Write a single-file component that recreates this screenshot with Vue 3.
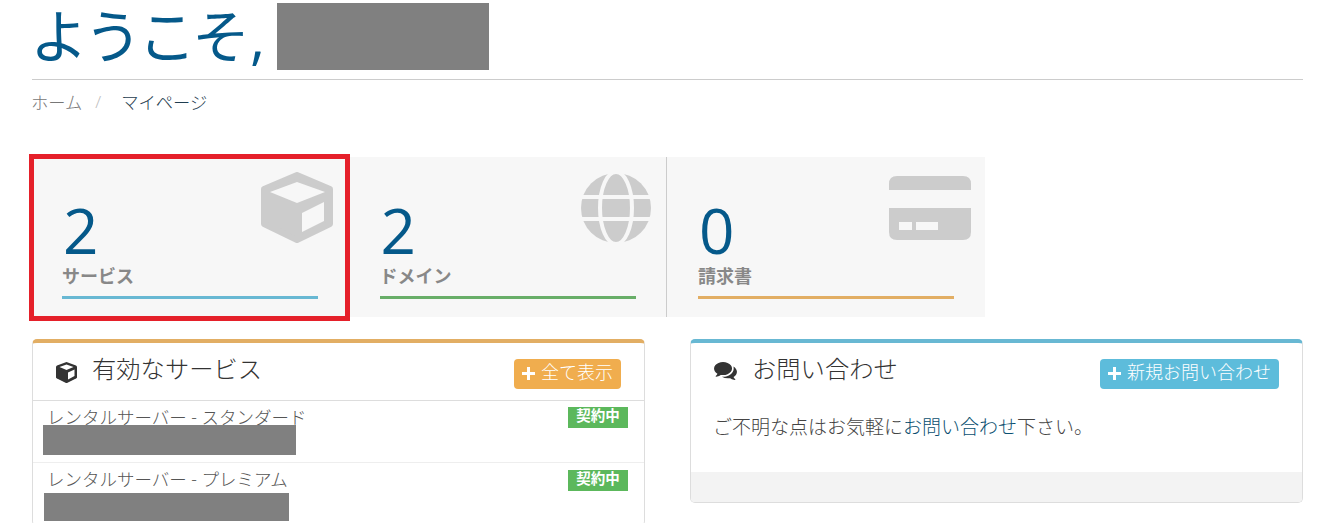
<script setup>
const tiles = [
  { n: 2, label: 'サービス', bar: 'bar-info', icon: 'cube', marked: true },
  { n: 2, label: 'ドメイン', bar: 'bar-success', icon: 'globe' },
  { n: 0, label: '請求書', bar: 'bar-warning', icon: 'card' },
]
const services = [
  { name: 'レンタルサーバー - スタンダード', redact: 'redact-a' },
  { name: 'レンタルサーバー - プレミアム', redact: 'redact-b' },
]
const commentsPath = 'M1408 768q0 139-94 257t-256.5 186.5-353.5 68.5q-86 0-176-16-124 88-278 128-36 9-86 16h-3q-11 0-20.5-8t-11.5-21q-1-3-1-6.5t.5-6.5 2-6l2.5-5 3.5-5.5 4-5 4.5-5 4-4.5q5-6 23-25t26-29.5 22.5-29 25-38.5 20.5-44q-124-72-195-177t-71-224q0-139 94-257t256.5-186.5 353.5-68.5 353.5 68.5 256.5 186.5 94 257zm384 256q0 120-71 224.5t-195 176.5q10 24 20.5 44t25 38.5 22.5 29 26 29.5 23 25q1 1 4 4.5t4.5 5 4 5 3.5 5.5l2.5 5 2 6 .5 6.5-1 6.5q-3 14-13 22t-22 7q-50-7-86-16-154-40-278-128-90 16-176 16-271 0-472-132 58 4 88 4 161 0 309-45t264-129q125-92 192-212t67-254q0-77-23-152 129 71 204 178t75 230z'
</script>

<template>
  <div class="page">
    <header class="title-row">
      <h1>ようこそ<span class="comma">,</span></h1>
      <span class="redact redact-title"></span>
    </header>
    <nav class="crumbs">
      <span class="crumb-home">ホーム</span>
      <span class="crumb-sep">/</span>
      <span class="crumb-current">マイページ</span>
    </nav>

    <section class="tiles">
      <div v-for="t in tiles" :key="t.label" class="tile">
        <div class="tile-n">{{ t.n }}</div>
        <div class="tile-label">{{ t.label }}</div>
        <div class="tile-bar" :class="t.bar"></div>

        <svg v-if="t.icon === 'cube'" class="ic ic-cube" viewBox="0 0 72 71">
          <path d="M36 3 69 17V52L36 68 3 52V17Z" fill="#ccc" stroke="#ccc" stroke-width="6" stroke-linejoin="round" />
          <path d="M36 10 64 20 36 31 9 20Z" fill="#f7f7f7" />
          <path d="M41 41 63 30V49L41 60Z" fill="#f7f7f7" />
        </svg>
        <svg v-else-if="t.icon === 'globe'" class="ic ic-globe" viewBox="0 0 70 70">
          <circle cx="35" cy="35" r="35" fill="#ccc" />
          <ellipse cx="35" cy="35" rx="16" ry="36" fill="none" stroke="#f7f7f7" stroke-width="4" />
          <rect x="0" y="22" width="70" height="4" fill="#f7f7f7" />
          <rect x="0" y="44" width="70" height="4" fill="#f7f7f7" />
        </svg>
        <svg v-else class="ic ic-card" viewBox="0 0 82 64">
          <path d="M0 14V8Q0 0 8 0H74Q82 0 82 8V14Z" fill="#ccc" />
          <path d="M0 32H82V56Q82 64 74 64H8Q0 64 0 56Z" fill="#ccc" />
          <rect x="10" y="46" width="13" height="8" fill="#f7f7f7" />
          <rect x="27" y="46" width="22" height="8" fill="#f7f7f7" />
        </svg>

        <div v-if="t.marked" class="marker"></div>
      </div>
    </section>

    <section class="panels">
      <article class="panel panel-warning">
        <div class="panel-head with-line">
          <svg class="head-ic" viewBox="0 0 21 21">
            <path d="M10.5 0 20 3.5Q21 4 21 5V15.5Q21 16 20 16.5L11 21H10L1 16.5Q0 16 0 15.5V5Q0 4 1 3.5Z" fill="#333" />
            <path d="M10.5 2.5 17.5 5 10.5 8 3.5 5Z" fill="#fff" />
            <path d="M12 10.5 18.5 7.5V14L12 17.5Z" fill="#fff" />
          </svg>
          <h2>有効なサービス</h2>
          <button class="btn btn-warning">
            <svg class="plus" viewBox="0 0 13 13"><path d="M5 0H8V5H13V8H8V13H5V8H0V5H5Z" fill="#fff" /></svg>
            <span class="btn-text">全て表示</span>
          </button>
        </div>
        <div v-for="s in services" :key="s.name" class="row">
          <div class="row-text">
            <div class="row-name">{{ s.name }}</div>
            <span class="redact" :class="s.redact"></span>
          </div>
          <span class="badge">契約中</span>
        </div>
      </article>

      <article class="panel panel-info">
        <div class="panel-head">
          <svg class="head-ic head-ic-chat" viewBox="0 256 1792 1408">
            <path :d="commentsPath" fill="#333" />
          </svg>
          <h2>お問い合わせ</h2>
          <button class="btn btn-info">
            <svg class="plus" viewBox="0 0 13 13"><path d="M5 0H8V5H13V8H8V13H5V8H0V5H5Z" fill="#fff" /></svg>
            <span class="btn-text">新規お問い合わせ</span>
          </button>
        </div>
        <p class="panel-body">ご不明な点はお気軽に<a class="link">お問い合わせ</a>下さい。</p>
        <div class="panel-foot"></div>
      </article>
    </section>
  </div>
</template>

<style scoped>
.page {
  box-sizing: border-box;
  width: 1323px;
  height: 523px;
  padding: 0 20px 0 32px;
  overflow: hidden;
  font-family: "Open Sans", "Noto Sans CJK JP", sans-serif;
  color: #333;
  background: #fff;
}
.title-row {
  display: flex;
  height: 79px;
  border-bottom: 1px solid #ccc;
  position: relative;
}
h1 {
  margin: 0 0 0 -2px;
  font-size: 58px;
  font-weight: 400;
  letter-spacing: -4px;
  line-height: 72px;
  color: #05598a;
}
.comma { margin-left: 4px; }
.redact {
  display: block;
  background: #808080;
}
.redact-title {
  position: absolute;
  left: 245px;
  top: 3px;
  width: 212px;
  height: 67px;
}
.crumbs {
  display: flex;
  height: 43px;
  align-items: center;
  margin-left: -1px;
  font-size: 17.3px;
  font-weight: 300;
}
.crumb-home { color: #777; }
.crumb-sep { color: #bbb; margin: 0 20px 0 13px; }
.crumb-current { color: #1f3d50; }

.tiles {
  display: flex;
  margin-top: 34px;
}
.tile {
  position: relative;
  box-sizing: border-box;
  flex: 0 0 317.5px;
  height: 160px;
  padding: 37px 0 0 30px;
  background: #f7f7f7;
  border-right: 1px solid #ccc;
}
.tile:last-child { border-right: 0; flex-basis: 318px; padding-left: 31px; }
.tile-n {
  padding-left: 1px;
  font-size: 62px;
  line-height: 72px;
  color: #05598a;
  font-weight: 400;
}
.tile-label {
  margin-top: -1px;
  font-size: 18px;
  font-weight: 700;
  line-height: 22px;
  color: #888;
}
.tile-bar {
  width: 256px;
  height: 3px;
  margin-top: 9px;
}
.bar-info { background: #68b8d3; }
.bar-success { background: #68ae68; }
.bar-warning { background: #e2ae64; }
.ic { position: absolute; }
.ic-cube { width: 72px; height: 71px; top: 15px; left: 229px; }
.ic-globe { width: 70px; height: 70px; top: 16px; left: 231.5px; }
.ic-card { width: 82px; height: 64px; top: 19px; left: 222px; }
.marker {
  position: absolute;
  z-index: 2;
  left: -3px;
  top: -3px;
  width: 321px;
  height: 167px;
  box-sizing: border-box;
  border: 5px solid #e5202a;
}

.panels {
  display: flex;
  justify-content: space-between;
  align-items: flex-start;
  margin-top: 22px;
}
.panel {
  box-sizing: border-box;
  width: 613px;
  background: #fff;
  border: 1px solid #ddd;
  border-top: 4px solid;
  border-radius: 5px;
  overflow: hidden;
}
.panel-warning { border-top-color: #e2ae64; }
.panel-info { border-top-color: #68b8d3; }
.panel-head {
  display: flex;
  align-items: flex-start;
  height: 57px;
  box-sizing: border-box;
  padding: 16px 23px 0 23px;
}
.with-line { border-bottom: 1px solid #ddd; height: 58px; }
.head-ic { width: 21px; height: 21px; margin-top: 3px; flex: none; }
.head-ic-chat { width: 23px; height: 18px; }
h2 {
  margin: -3px 0 0 15px;
  font-size: 24.3px;
  font-weight: 300;
  line-height: 26px;
  color: #333;
}
.btn {
  display: flex;
  align-items: center;
  gap: 6px;
  height: 30px;
  margin: 0 0 0 auto;
  padding: 0 8px;
  border: 0;
  border-radius: 4px;
  font: inherit;
  font-size: 18px;
  font-weight: 300;
  color: #fff;
}
.btn-text { position: relative; top: -3px; }
.btn-warning { background: #f0ad4e; }
.btn-info { background: #5dbcdb; }
.plus { width: 13px; height: 13px; flex: none; margin-bottom: 2px; }
.row {
  display: flex;
  justify-content: space-between;
  align-items: flex-start;
  height: 62px;
  box-sizing: border-box;
  padding: 5px 16px 0 14px;
  border-bottom: 1px solid #eee;
}
.row-name {
  font-size: 17.5px;
  line-height: 22px;
  font-weight: 300;
  color: #555;
}
.redact-a { margin: -3px 0 0 -4px; width: 253px; height: 30px; }
.redact-b { margin: 3px 0 0 -3px; width: 245px; height: 28px; }
.badge {
  width: 60px;
  height: 21px;
  margin-top: 1px;
  background: #5cb85c;
  color: #fff;
  font-size: 14.5px;
  font-weight: 700;
  line-height: 17px;
  text-align: center;
}
.row + .row .badge { margin-top: 2px; }
.panel-body {
  margin: 0;
  padding: 14px 22px 0;
  height: 72px;
  box-sizing: border-box;
  font-size: 19px;
  font-weight: 300;
  line-height: 26px;
  color: #444;
}
.link { color: #0a4f70; }
.panel-foot {
  height: 30px;
  background: #f3f3f3;
}
</style>

<style>
html, body { overflow: hidden; background: #fff; }
</style>
